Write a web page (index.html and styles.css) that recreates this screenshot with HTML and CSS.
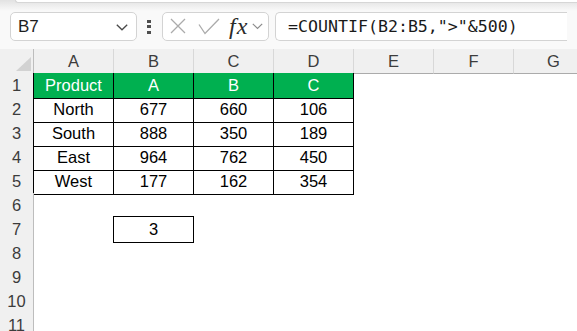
FILE: index.html
```html
<!DOCTYPE html>
<html>
<head>
<meta charset="utf-8">
<link rel="stylesheet" href="styles.css">
</head>
<body>
<div class="top"><div class="ribbon"></div></div>
<div class="fbar">
  <div class="namebox">
    <span class="nb-text">B7</span>
    <svg class="nb-chev" width="12" height="7" viewBox="0 0 12 7"><polyline points="0.8,0.8 6,5.8 11.2,0.8" fill="none" stroke="#4a4a4a" stroke-width="1.3"/></svg>
  </div>
  <div class="dots"><i></i><i></i><i></i></div>
  <div class="fxbox">
    <svg class="ic-x" width="16" height="16" viewBox="0 0 16 16"><path d="M1 1 L15 15 M15 1 L1 15" stroke="#ababab" stroke-width="1.3" fill="none"/></svg>
    <svg class="ic-check" width="22" height="17" viewBox="0 0 22 17"><polyline points="1,6.5 7,15.5 21,1" fill="none" stroke="#ababab" stroke-width="1.3"/></svg>
    <span class="fx">fx</span>
    <svg class="ic-chev" width="11" height="7" viewBox="0 0 11 7"><polyline points="0.8,0.8 5.5,5.5 10.2,0.8" fill="none" stroke="#8c8c8c" stroke-width="1.2"/></svg>
  </div>
  <div class="formula">=COUNTIF(B2:B5,"&gt;"&amp;500)</div>
</div>
<div class="sheet">
  <div class="row">
    <div class="corner"><i class="tri"></i></div>
    <div class="ch">A</div><div class="ch">B</div><div class="ch">C</div><div class="ch">D</div><div class="ch">E</div><div class="ch">F</div><div class="ch">G</div>
  </div>
  <div class="row">
    <div class="rh">1</div>
    <div class="c t g first">Product</div><div class="c t g">A</div><div class="c t g">B</div><div class="c t g">C</div>
    <div class="c"></div><div class="c"></div><div class="c"></div>
  </div>
  <div class="row">
    <div class="rh">2</div>
    <div class="c t first">North</div><div class="c t">677</div><div class="c t">660</div><div class="c t">106</div>
    <div class="c"></div><div class="c"></div><div class="c"></div>
  </div>
  <div class="row">
    <div class="rh">3</div>
    <div class="c t first">South</div><div class="c t">888</div><div class="c t">350</div><div class="c t">189</div>
    <div class="c"></div><div class="c"></div><div class="c"></div>
  </div>
  <div class="row">
    <div class="rh">4</div>
    <div class="c t first">East</div><div class="c t">964</div><div class="c t">762</div><div class="c t">450</div>
    <div class="c"></div><div class="c"></div><div class="c"></div>
  </div>
  <div class="row">
    <div class="rh">5</div>
    <div class="c t first">West</div><div class="c t">177</div><div class="c t">162</div><div class="c t">354</div>
    <div class="c"></div><div class="c"></div><div class="c"></div>
  </div>
  <div class="row"><div class="rh">6</div></div>
  <div class="row">
    <div class="rh">7</div>
    <div class="c"></div><div class="c boxed">3</div>
  </div>
  <div class="row"><div class="rh">8</div></div>
  <div class="row"><div class="rh">9</div></div>
  <div class="row"><div class="rh">10</div></div>
  <div class="row"><div class="rh">11</div></div>
</div>
</body>
</html>
```
FILE: styles.css
```css
* { box-sizing: border-box; }
html, body { margin: 0; padding: 0; }
body {
  width: 577px;
  height: 331px;
  overflow: hidden;
  background: #f9f9f9;
  font-family: "Liberation Sans", Arial, sans-serif;
}
.top {
  height: 12px;
  background: linear-gradient(#e2e2e2 0, #f9f9f9 11px);
}
.ribbon {
  margin-left: 15px;
  height: 3px;
  background: #fff;
  border-left: 1px solid #d6d6d6;
  border-bottom: 1px solid #d6d6d6;
  border-bottom-left-radius: 6px;
}
.fbar {
  display: flex;
  align-items: stretch;
  height: 29px;
  margin-bottom: 8px;
  padding-left: 10px;
  width: 567px;
  overflow: hidden;
}
.namebox {
  width: 127px;
  flex: none;
  background: #fff;
  border: 1px solid #d3d3d3;
  border-radius: 5px;
  display: flex;
  align-items: center;
  justify-content: space-between;
  padding: 0 8px 0 7px;
}
.nb-text {
  font-family: "Liberation Sans", Arial, sans-serif;
  font-size: 17px;
  color: #1e1e1e;
}
.nb-chev { margin-top: 2px; }
.dots {
  margin-left: 10px;
  width: 4px;
  flex: none;
  display: flex;
  flex-direction: column;
  justify-content: center;
  gap: 2.5px;
}
.dots i {
  display: block;
  width: 3.5px;
  height: 3px;
  background: #4e4e4e;
}
.fxbox {
  margin-left: 11px;
  width: 107px;
  flex: none;
  background: #fff;
  border: 1px solid #d3d3d3;
  border-radius: 5px;
  display: flex;
  align-items: center;
  padding-left: 7px;
}
.ic-x { margin-top: -2px; }
.ic-check { margin-left: 12px; margin-top: -1px; }
.fx {
  margin-left: 9px;
  font-family: "Liberation Serif", "Times New Roman", serif;
  font-style: italic;
  font-size: 24px;
  letter-spacing: 1px;
  color: #2a2a2a;
  line-height: 1;
  margin-top: -2px;
}
.ic-chev { margin-left: 4px; }
.formula {
  margin-left: 6px;
  width: 320px;
  flex: none;
  background: #fff;
  border: 1px solid #d3d3d3;
  border-right: 0;
  border-radius: 5px 0 0 5px;
  padding-left: 12px;
  font-family: "DejaVu Sans Mono", "Liberation Mono", monospace;
  font-size: 16.6px;
  line-height: 27px;
  color: #1a1a1a;
  white-space: nowrap;
}
.sheet {
  background: #fff;
  width: 577px;
  overflow: hidden;
}
.row {
  display: grid;
  grid-template-columns: 34px repeat(7, 80px);
  height: 24px;
}
.corner {
  background: #f0f0f0;
  border-right: 1px solid #bdbdbd;
  border-bottom: 1px solid #ababab;
  display: flex;
  justify-content: flex-end;
  align-items: flex-end;
  padding: 0 2px 2px 0;
}
.tri {
  display: block;
  width: 15px;
  height: 14px;
  background: #d2d2d2;
  clip-path: polygon(100% 0, 100% 100%, 0 100%);
}
.ch {
  background: #f0f0f0;
  border-right: 1px solid #d8d8d8;
  border-bottom: 1px solid #ababab;
  text-align: center;
  font-size: 16.5px;
  line-height: 24px;
  color: #3c3c3c;
}
.rh {
  background: #f0f0f0;
  border-right: 1px solid #bdbdbd;
  border-bottom: 1px solid #dadada;
  text-align: center;
  font-size: 16.5px;
  line-height: 25px;
  color: #3c3c3c;
}
.c {
  text-align: center;
  font-size: 16.5px;
  line-height: 25px;
  color: #000;
}
.t {
  border-right: 1px solid #000;
  border-bottom: 1px solid #000;
}
.t.first {
  margin-left: -1px;
  border-left: 1px solid #000;
}
.g {
  background: #00b050;
  color: #fff;
}
.boxed {
  margin: -1px 0 0 -1px;
  border: 1px solid #000;
}
```
